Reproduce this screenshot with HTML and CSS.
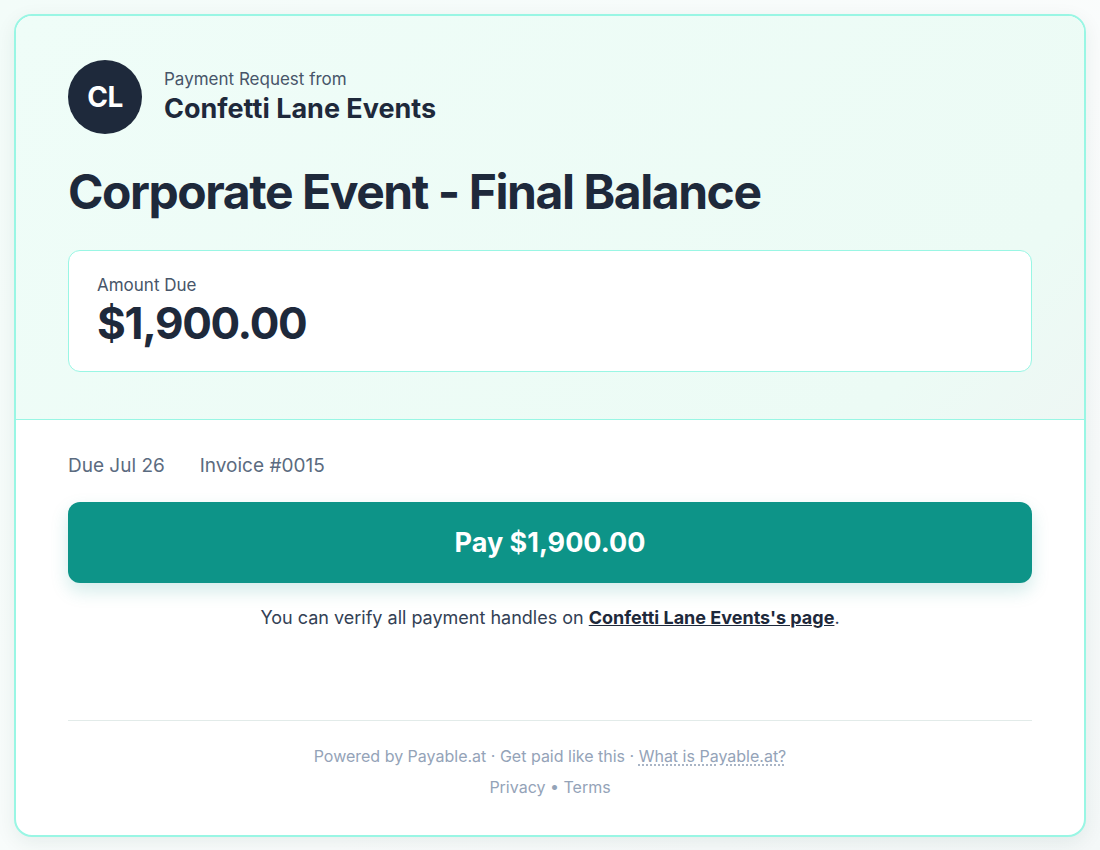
FILE: index.html
```html
<!DOCTYPE html>
<html lang="en">

<head>
    <meta charset="UTF-8">
    <meta name="viewport" content="width=device-width, initial-scale=1.0">
    <title>Corporate Event - Final Balance</title>
    <link rel="stylesheet" href="styles.css">
</head>

<body>
    <div class="card">
        <div class="card-header">
            <div class="merchant">
                <div class="avatar">CL</div>
                <div class="merchant-info">
                    <span class="merchant-label">Payment Request from</span>
                    <span class="merchant-name">Confetti Lane Events</span>
                </div>
            </div>

            <h1 class="title">Corporate Event - Final Balance</h1>

            <div class="amount-box">
                <span class="amount-label">Amount Due</span>
                <span class="amount-value">$1,900.00</span>
            </div>
        </div>

        <div class="card-body">
            <div class="meta">
                <span>Due Jul 26</span>
                <span>Invoice #0015</span>
            </div>

            <button class="pay-button">Pay $1,900.00</button>

            <p class="verify">You can verify all payment handles on <a href="#">Confetti Lane Events's page</a>.</p>

            <div class="footer">
                <p class="footer-line">Powered by Payable.at · Get paid like this · <a href="#" class="dotted">What is Payable.at?</a></p>
                <p class="footer-line"><a href="#">Privacy</a> • <a href="#">Terms</a></p>
            </div>
        </div>
    </div>
</body>

</html>
```

FILE: styles.css
```css
:root {
    --mint: #99f6e4;
    --dark: #1e293b;
    --slate: #475569;
    --muted: #94a3b8;
    --teal: #0d9488;
}

body {
    font-family: Inter, 'Noto Sans', sans-serif;
    background: linear-gradient(135deg, #f3fcf9 0%, #fafcfc 60%, #f4f8f8 100%);
    margin: 0;
    padding: 14px;
    color: var(--dark);
}

.card {
    background-color: white;
    border: 2px solid var(--mint);
    border-radius: 18px;
    overflow: hidden;
    box-shadow: 0 6px 20px rgba(15, 60, 50, 0.08);
}

.card-header {
    background: linear-gradient(135deg, #effdf8 0%, #ecfbf5 85%, #eef7f4 100%);
    border-bottom: 1px solid var(--mint);
    padding: 44px 52px 47px;
}

.merchant {
    display: flex;
    align-items: center;
    gap: 22px;
}

.avatar {
    width: 74px;
    height: 74px;
    border-radius: 50%;
    background-color: var(--dark);
    color: white;
    font-size: 28px;
    font-weight: 700;
    letter-spacing: -0.5px;
    display: flex;
    align-items: center;
    justify-content: center;
}

.merchant-info {
    display: flex;
    flex-direction: column;
    gap: 3px;
    line-height: 1.2;
}

.merchant-label {
    font-size: 17px;
    color: var(--slate);
}

.merchant-name {
    font-size: 27px;
    font-weight: 700;
    color: var(--dark);
}

.title {
    font-size: 48px;
    line-height: 1.2;
    font-weight: 700;
    margin: 29px 0;
    letter-spacing: -0.03em;
}

.amount-box {
    background-color: white;
    border: 1px solid var(--mint);
    border-radius: 12px;
    padding: 24px 28px 21px;
    display: flex;
    flex-direction: column;
    gap: 2px;
    line-height: 1.2;
}

.amount-label {
    font-size: 17px;
    color: var(--slate);
}

.amount-value {
    font-size: 44px;
    font-weight: 700;
    letter-spacing: -0.03em;
}

.card-body {
    padding: 35px 52px 36px;
}

.meta {
    display: flex;
    gap: 35px;
    font-size: 19px;
    line-height: 1.2;
    color: #5b6b80;
}

.pay-button {
    display: block;
    width: 100%;
    margin-top: 24px;
    height: 81px;
    border: none;
    border-radius: 12px;
    background-color: var(--teal);
    color: white;
    font-family: inherit;
    font-size: 27px;
    font-weight: 700;
    box-shadow: 0 8px 18px rgba(13, 148, 136, 0.18);
    cursor: pointer;
}

.verify {
    text-align: center;
    font-size: 18px;
    line-height: 1.5;
    color: #334155;
    margin: 21px 0 0;
}

.verify a {
    color: var(--dark);
    font-weight: 700;
}

.footer {
    margin-top: 89px;
    border-top: 1px solid #e2ebe9;
    padding-top: 23px;
    text-align: center;
}

.footer-line {
    font-size: 16px;
    line-height: 1.5;
    color: var(--muted);
    margin: 0;
}

.footer-line + .footer-line {
    margin-top: 7px;
}

.footer-line a {
    color: var(--muted);
    text-decoration: none;
}

.footer-line a.dotted {
    text-decoration: underline dotted;
    text-underline-offset: 3px;
}
```
